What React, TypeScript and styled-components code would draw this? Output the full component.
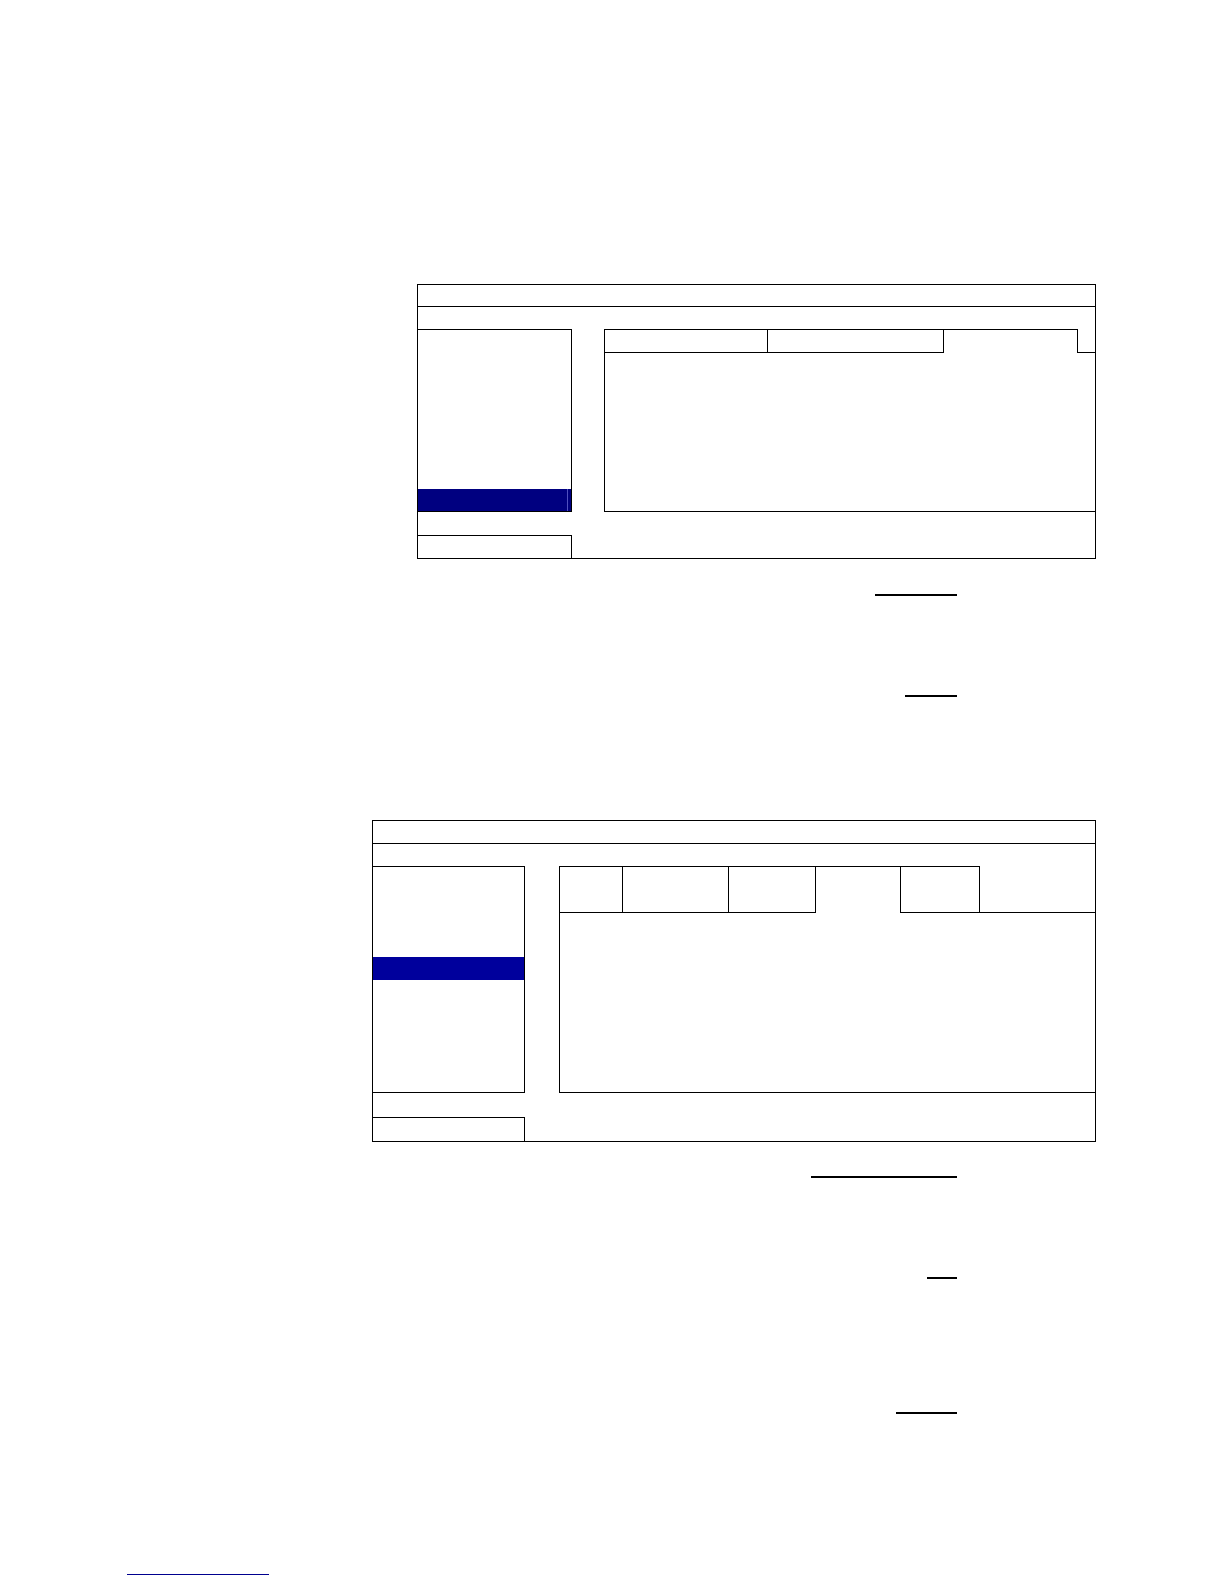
import React from 'react'
import styled, { createGlobalStyle } from 'styled-components'

//Global
const GlobalStyle = createGlobalStyle`
  *, *::before, *::after {
    box-sizing: border-box;
  }
  html, body {
    margin: 0;
    padding: 0;
    background: #ffffff;
    font-family: "Liberation Sans", Arial, sans-serif;
  }
`

//Styled Components
const Page = styled.div`
  width: 1224px;
  min-height: 1584px;
  display: flex;
  flex-direction: column;
  padding-top: 284px;
  background: #ffffff;
`

const MenuFrame = styled.div<{ $left: number; $width: number }>`
  margin-left: ${(p) => p.$left}px;
  width: ${(p) => p.$width}px;
  display: flex;
  flex-direction: column;
  border: 1px solid #000;
`

const TitleBar = styled.div<{ $height: number }>`
  height: ${(p) => p.$height}px;
  border-bottom: 1px solid #000;
`

const Gap = styled.div<{ $height: number }>`
  height: ${(p) => p.$height}px;
`

const Body = styled.div<{ $gap: number }>`
  display: flex;
  gap: ${(p) => p.$gap}px;
`

const SideMenu = styled.div<{ $width: number; $height: number }>`
  width: ${(p) => p.$width}px;
  height: ${(p) => p.$height}px;
  flex-shrink: 0;
  display: flex;
  flex-direction: column;
  border-top: 1px solid #000;
  border-right: 1px solid #000;
  border-bottom: 1px solid #000;
`

const MenuFill = styled.div`
  flex: 1;
`

const MenuItem = styled.div<{
  $height: number
  $selected?: boolean
  $tone: string
  $stripe?: boolean
}>`
  height: ${(p) => p.$height}px;
  flex-shrink: 0;
  background: ${(p) => (p.$selected ? p.$tone : 'transparent')};
  box-shadow: ${(p) =>
    p.$selected && p.$stripe
      ? `inset -3px 0 0 ${p.$tone}, inset -4px 0 0 #5050c0`
      : 'none'};
`

const ContentPanel = styled.div<{ $height: number }>`
  flex: 1;
  height: ${(p) => p.$height}px;
  display: flex;
  flex-direction: column;
  border-left: 1px solid #000;
  border-bottom: 1px solid #000;
`

const TabBar = styled.div<{ $height: number }>`
  height: ${(p) => p.$height}px;
  display: flex;
`

const Tab = styled.div<{ $width: number; $active?: boolean }>`
  width: ${(p) => p.$width}px;
  flex-shrink: 0;
  border-top: 1px solid #000;
  border-right: 1px solid #000;
  border-bottom: ${(p) => (p.$active ? 'none' : '1px solid #000')};
`

const TabFiller = styled.div`
  flex: 1;
  border-bottom: 1px solid #000;
`

const Footer = styled.div<{ $width: number; $height: number }>`
  width: ${(p) => p.$width}px;
  height: ${(p) => p.$height}px;
  border-top: 1px solid #000;
  border-right: 1px solid #000;
`

const RuleRow = styled.div<{ $top: number }>`
  width: 957px;
  margin-top: ${(p) => p.$top}px;
  display: flex;
  justify-content: flex-end;
`

const Rule = styled.div<{ $width: number }>`
  width: ${(p) => p.$width}px;
  height: 2px;
  background: #000;
`

const LinkLine = styled.div<{ $top: number }>`
  margin-top: ${(p) => p.$top}px;
  margin-left: 127px;
  width: 142px;
  height: 1px;
  background: #00008f;
`

//Interfaces
interface IMenuShot {
  left: number
  width: number
  titleHeight: number
  topGap: number
  sideWidth: number
  bodyHeight: number
  bodyGap: number
  itemHeight: number
  itemCount: number
  selected: number
  tone: string
  stripe: boolean
  tabHeight: number
  tabs: number[]
  activeTab: number
  bottomGap: number
  footerHeight: number
}

const shots: IMenuShot[] = [
  {
    left: 417,
    width: 679,
    titleHeight: 22,
    topGap: 22,
    sideWidth: 154,
    bodyHeight: 183,
    bodyGap: 32,
    itemHeight: 22,
    itemCount: 8,
    selected: 7,
    tone: '#000080',
    stripe: true,
    tabHeight: 24,
    tabs: [163, 176, 134],
    activeTab: 2,
    bottomGap: 23,
    footerHeight: 23,
  },
  {
    left: 372,
    width: 724,
    titleHeight: 23,
    topGap: 22,
    sideWidth: 152,
    bodyHeight: 227,
    bodyGap: 34,
    itemHeight: 22.5,
    itemCount: 10,
    selected: 4,
    tone: '#00009c',
    stripe: false,
    tabHeight: 47,
    tabs: [63, 106, 87, 85, 79],
    activeTab: 3,
    bottomGap: 24,
    footerHeight: 24,
  },
]

//React Components
const MenuShot: React.FC<{ shot: IMenuShot }> = ({ shot }) => {
  const items = Array.from({ length: shot.itemCount }, (_, i) => i)

  return (
    <MenuFrame $left={shot.left} $width={shot.width}>
      <TitleBar $height={shot.titleHeight} />
      <Gap $height={shot.topGap} />
      <Body $gap={shot.bodyGap}>
        <SideMenu $width={shot.sideWidth} $height={shot.bodyHeight}>
          {shot.selected === shot.itemCount - 1 && <MenuFill />}
          {items.map((i) => (
            <MenuItem
              key={i}
              $height={shot.itemHeight}
              $selected={i === shot.selected}
              $tone={shot.tone}
              $stripe={shot.stripe}
            />
          ))}
        </SideMenu>
        <ContentPanel $height={shot.bodyHeight}>
          <TabBar $height={shot.tabHeight}>
            {shot.tabs.map((w, i) => (
              <Tab key={i} $width={w} $active={i === shot.activeTab} />
            ))}
            <TabFiller />
          </TabBar>
        </ContentPanel>
      </Body>
      <Gap $height={shot.bottomGap} />
      <Footer $width={shot.sideWidth} $height={shot.footerHeight} />
    </MenuFrame>
  )
}

const App: React.FC = () => {
  return (
    <>
      <GlobalStyle />
      <Page>
        <MenuShot shot={shots[0]} />
        <RuleRow $top={35}>
          <Rule $width={82} />
        </RuleRow>
        <RuleRow $top={99}>
          <Rule $width={52} />
        </RuleRow>
        <Gap $height={123} />
        <MenuShot shot={shots[1]} />
        <RuleRow $top={34}>
          <Rule $width={146} />
        </RuleRow>
        <RuleRow $top={99}>
          <Rule $width={30} />
        </RuleRow>
        <RuleRow $top={133}>
          <Rule $width={61} />
        </RuleRow>
        <LinkLine $top={160} />
      </Page>
    </>
  )
}

export default App
